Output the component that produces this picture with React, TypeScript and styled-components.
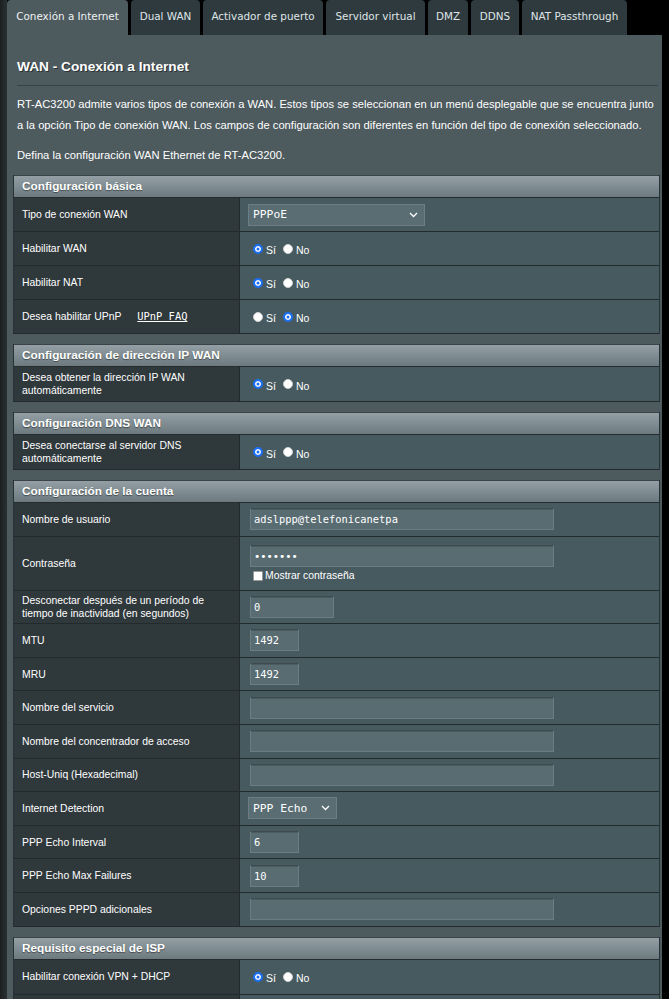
import React from "react";
import styled, { createGlobalStyle } from "styled-components";

const GlobalStyle = createGlobalStyle`
  html, body { margin: 0; padding: 0; background: #000; }
  body { font-family: "Liberation Sans", Arial, sans-serif; color: #fff; }
  * { box-sizing: border-box; }
`;

const Page = styled.div`
  width: 669px;
  min-height: 999px;
  padding-left: 7px;
  background: linear-gradient(to right, #1b1f20 0px, #2b3133 7px, #000 7px);
`;

const Main = styled.div`
  width: 655px;
  display: flex;
  flex-direction: column;
`;

const TabBar = styled.nav`
  display: flex;
  gap: 3px;
  height: 35px;
  background: #000;
`;

const Tab = styled.div<{ $w: number; $active?: boolean }>`
  width: ${(p) => p.$w}px;
  height: 35px;
  border-radius: 4px 4px 0 0;
  background: ${(p) => (p.$active ? "#4d5a5e" : "#2f3a3e")};
  color: ${(p) => (p.$active ? "#eef2f3" : "#dfe5e7")};
  font-family: "DejaVu Sans", Verdana, sans-serif;
  font-size: 10.4px;
  line-height: 32px;
  text-align: center;
  white-space: nowrap;
`;

const Panel = styled.section`
  background: #4d5a5e;
  padding: 0 2px 20px 6px;
  display: flex;
  flex-direction: column;
`;

const Title = styled.h1`
  margin: 22px 0 0 4px;
  font-size: 13.7px;
  line-height: 20px;
  font-weight: bold;
  color: #fff;
  text-shadow: 1px 1px 0 #2b3335;
`;

const Divider = styled.div`
  margin: 8px 0 0 4px;
  width: 641px;
  height: 1px;
  background: #37434a;
`;

const Desc = styled.p<{ $gap: number }>`
  margin: ${(p) => p.$gap}px 0 0 4px;
  width: 642px;
  font-size: 11.2px;
  line-height: 21px;
  color: #fff;
`;

const Section = styled.div<{ $first?: boolean }>`
  width: 647px;
  margin-top: ${(p) => (p.$first ? 9 : 10)}px;
  border-left: 1px solid #283134;
  border-right: 1px solid #283134;
  display: flex;
  flex-direction: column;
`;

const SectionHeader = styled.div`
  height: 23px;
  padding-left: 8px;
  background: linear-gradient(#939fa4, #6c7a7f);
  border-top: 1px solid #3a4448;
  border-bottom: 1px solid #242c2f;
  font-size: 11.8px;
  font-weight: bold;
  line-height: 21px;
  color: #fff;
  text-shadow: 0 1px 1px rgba(0, 0, 0, 0.45);
`;

const Row = styled.div<{ $h?: number }>`
  display: grid;
  grid-template-columns: 226px 1fr;
  height: ${(p) => p.$h ?? 33.6}px;
  border-bottom: 1px solid #222a2d;
`;

const LabelCell = styled.div`
  background: #2f383b;
  border-right: 1px solid #222a2d;
  padding: 0 10px 0 8px;
  display: flex;
  align-items: center;
  font-size: 10.4px;
  line-height: 13px;
  color: #fff;
`;

const FaqLink = styled.a`
  margin-left: 16px;
  font-family: "DejaVu Sans Mono", monospace;
  font-size: 10.4px;
  color: #fff;
  text-decoration: underline;
`;

const ValueCell = styled.div<{ $stack?: boolean }>`
  background: #475a5f;
  padding-left: 10px;
  display: flex;
  flex-direction: ${(p) => (p.$stack ? "column" : "row")};
  align-items: ${(p) => (p.$stack ? "flex-start" : "center")};
  justify-content: ${(p) => (p.$stack ? "center" : "flex-start")};
  gap: ${(p) => (p.$stack ? 3 : 0)}px;
`;

const TextInput = styled.input<{ $w: number }>`
  width: ${(p) => p.$w}px;
  height: 22px;
  margin: 0;
  padding: 0 3px;
  background: #586c72;
  border: 1px solid #6a7d82;
  border-top-color: #3d4a4e;
  box-shadow: inset 0 1px 0 #4b5c61;
  color: #fff;
  font-family: "DejaVu Sans Mono", monospace;
  font-size: 10.4px;
  outline: none;
`;

const SelectBox = styled.div<{ $w: number }>`
  width: ${(p) => p.$w}px;
  height: 22px;
  margin-left: -2px;
  padding: 0 6px 0 4px;
  display: flex;
  align-items: center;
  justify-content: space-between;
  background: #596d73;
  border: 1px solid #6c7e83;
  font-family: "DejaVu Sans Mono", monospace;
  font-size: 11.3px;
  color: #fff;
  white-space: pre;
`;

const RadioGroup = styled.div`
  display: flex;
  align-items: center;
  gap: 7px;
  margin-left: 3px;
`;

const Option = styled.label`
  display: flex;
  align-items: center;
  gap: 3px;
  font-size: 10.5px;
  color: #fff;
`;

const OptionText = styled.span`
  padding-top: 3px;
`;

const Radio = styled.input.attrs({ type: "radio" })`
  appearance: none;
  margin: 0;
  width: 10px;
  height: 10px;
  border-radius: 50%;
  background: #fff;
  border: 1px solid #d0d0d0;
  &:checked {
    border: 2px solid #1b6ff2;
    background: #1b6ff2;
    box-shadow: inset 0 0 0 1.5px #fff;
  }
`;

const Check = styled.input.attrs({ type: "checkbox" })`
  appearance: none;
  margin: 0;
  width: 10px;
  height: 10px;
  background: #fff;
  border: 1px solid #9a9a9a;
  border-radius: 1px;
`;

const CheckLabel = styled.label`
  display: flex;
  align-items: center;
  gap: 2px;
  margin-left: 3px;
  font-size: 10.4px;
  color: #fff;
`;

const Chevron = () => (
  <svg width="9" height="6" viewBox="0 0 9 6">
    <polyline points="1,1 4.5,4.5 8,1" fill="none" stroke="#fff" strokeWidth="1.3" />
  </svg>
);

const YesNo = ({ name, yes }: { name: string; yes: boolean }) => (
  <RadioGroup>
    <Option>
      <Radio name={name} defaultChecked={yes} />
      <OptionText>Sí</OptionText>
    </Option>
    <Option>
      <Radio name={name} defaultChecked={!yes} />
      <OptionText>No</OptionText>
    </Option>
  </RadioGroup>
);

const tabs: [string, number][] = [
  ["Conexión a Internet", 121],
  ["Dual WAN", 69],
  ["Activador de puerto", 120],
  ["Servidor virtual", 99],
  ["DMZ", 40],
  ["DDNS", 48],
  ["NAT Passthrough", 105],
];

const FieldRow = ({ label, w, value = "" }: { label: React.ReactNode; w: number; value?: string }) => (
  <Row>
    <LabelCell>
      <span>{label}</span>
    </LabelCell>
    <ValueCell>
      <TextInput $w={w} defaultValue={value} />
    </ValueCell>
  </Row>
);

export default function App() {
  return (
    <>
      <GlobalStyle />
      <Page>
        <Main>
          <TabBar>
            {tabs.map(([t, w], i) => (
              <Tab key={t} $w={w} $active={i === 0}>
                {t}
              </Tab>
            ))}
          </TabBar>
          <Panel>
            <Title>WAN - Conexión a Internet</Title>
            <Divider />
            <Desc $gap={8}>
              RT-AC3200 admite varios tipos de conexión a WAN. Estos tipos se seleccionan en un menú desplegable que se
              encuentra junto a la opción Tipo de conexión WAN. Los campos de configuración son diferentes en función del
              tipo de conexión seleccionado.
            </Desc>
            <Desc $gap={9}>Defina la configuración WAN Ethernet de RT-AC3200.</Desc>

            <Section $first>
              <SectionHeader>Configuración básica</SectionHeader>
              <Row $h={34}>
                <LabelCell>Tipo de conexión WAN</LabelCell>
                <ValueCell>
                  <SelectBox $w={177}>
                    <span>PPPoE</span>
                    <Chevron />
                  </SelectBox>
                </ValueCell>
              </Row>
              <Row $h={34}>
                <LabelCell>Habilitar WAN</LabelCell>
                <ValueCell>
                  <YesNo name="wan" yes />
                </ValueCell>
              </Row>
              <Row $h={34}>
                <LabelCell>Habilitar NAT</LabelCell>
                <ValueCell>
                  <YesNo name="nat" yes />
                </ValueCell>
              </Row>
              <Row $h={34}>
                <LabelCell>
                  Desea habilitar UPnP
                  <FaqLink>UPnP FAQ</FaqLink>
                </LabelCell>
                <ValueCell>
                  <YesNo name="upnp" yes={false} />
                </ValueCell>
              </Row>
            </Section>

            <Section>
              <SectionHeader>Configuración de dirección IP WAN</SectionHeader>
              <Row $h={35}>
                <LabelCell>
                  <span>
                    Desea obtener la dirección IP WAN
                    <br />
                    automáticamente
                  </span>
                </LabelCell>
                <ValueCell>
                  <YesNo name="ip" yes />
                </ValueCell>
              </Row>
            </Section>

            <Section>
              <SectionHeader>Configuración DNS WAN</SectionHeader>
              <Row $h={35}>
                <LabelCell>
                  <span>
                    Desea conectarse al servidor DNS
                    <br />
                    automáticamente
                  </span>
                </LabelCell>
                <ValueCell>
                  <YesNo name="dns" yes />
                </ValueCell>
              </Row>
            </Section>

            <Section>
              <SectionHeader>Configuración de la cuenta</SectionHeader>
              <FieldRow label="Nombre de usuario" w={304} value="adslppp@telefonicanetpa" />
              <Row $h={54}>
                <LabelCell>Contraseña</LabelCell>
                <ValueCell $stack>
                  <TextInput $w={304} type="password" defaultValue="1234567" />
                  <CheckLabel>
                    <Check />
                    <span>Mostrar contraseña</span>
                  </CheckLabel>
                </ValueCell>
              </Row>
              <FieldRow
                label={
                  <>
                    Desconectar después de un período de
                    <br />
                    tiempo de inactividad (en segundos)
                  </>
                }
                w={84}
                value="0"
              />
              <FieldRow label="MTU" w={49} value="1492" />
              <FieldRow label="MRU" w={49} value="1492" />
              <FieldRow label="Nombre del servicio" w={304} />
              <FieldRow label="Nombre del concentrador de acceso" w={304} />
              <FieldRow label="Host-Uniq (Hexadecimal)" w={304} />
              <Row>
                <LabelCell>Internet Detection</LabelCell>
                <ValueCell>
                  <SelectBox $w={89}>
                    <span>PPP Echo</span>
                    <Chevron />
                  </SelectBox>
                </ValueCell>
              </Row>
              <FieldRow label="PPP Echo Interval" w={49} value="6" />
              <FieldRow label="PPP Echo Max Failures" w={49} value="10" />
              <FieldRow label="Opciones PPPD adicionales" w={304} />
            </Section>

            <Section>
              <SectionHeader>Requisito especial de ISP</SectionHeader>
              <Row $h={35}>
                <LabelCell>Habilitar conexión VPN + DHCP</LabelCell>
                <ValueCell>
                  <YesNo name="vpn" yes />
                </ValueCell>
              </Row>
              <Row>
                <LabelCell />
                <ValueCell />
              </Row>
            </Section>
          </Panel>
        </Main>
      </Page>
    </>
  );
}
